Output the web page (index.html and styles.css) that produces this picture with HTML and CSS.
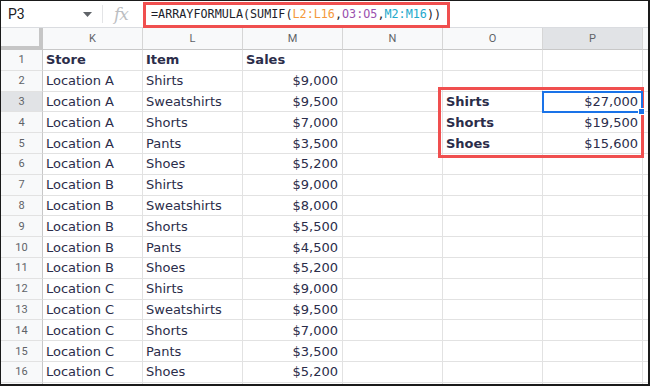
FILE: index.html
```html
<!DOCTYPE html>
<html lang="en">
<head>
    <meta charset="UTF-8">
    <meta name="viewport" content="width=device-width, initial-scale=1.0">
    <title>ARRAYFORMULA SUMIF</title>
    <link rel="stylesheet" href="styles.css">
</head>
<body>
    <div class="sheet">
        <div class="formula-bar">
            <div class="name-box">
                <span>P3</span>
                <svg class="caret" width="9" height="5" viewBox="0 0 9 5"><path d="M0 0h9L4.5 5z" fill="#5f6368"/></svg>
            </div>
            <div class="fx">fx</div>
            <div class="formula">=ARRAYFORMULA(SUMIF(<span class="ref-l">L2:L16</span>,<span class="ref-o">O3:O5</span>,<span class="ref-m">M2:M16</span>))</div>
        </div>
        <div class="grid" id="grid"></div>

        <div class="callout callout-formula"></div>
        <div class="callout callout-summary"></div>
        <div class="selection"><span class="handle"></span></div>
    </div>

    <script>
        const grid = document.getElementById('grid');
        const cols = ['K', 'L', 'M', 'N', 'O', 'P', ''];
        const rows = [
            ['Store', 'Item', 'Sales'],
            ['Location A', 'Shirts', '$9,000'],
            ['Location A', 'Sweatshirts', '$9,500', 'Shirts', '$27,000'],
            ['Location A', 'Shorts', '$7,000', 'Shorts', '$19,500'],
            ['Location A', 'Pants', '$3,500', 'Shoes', '$15,600'],
            ['Location A', 'Shoes', '$5,200'],
            ['Location B', 'Shirts', '$9,000'],
            ['Location B', 'Sweatshirts', '$8,000'],
            ['Location B', 'Shorts', '$5,500'],
            ['Location B', 'Pants', '$4,500'],
            ['Location B', 'Shoes', '$5,200'],
            ['Location C', 'Shirts', '$9,000'],
            ['Location C', 'Sweatshirts', '$9,500'],
            ['Location C', 'Shorts', '$7,000'],
            ['Location C', 'Pants', '$3,500'],
            ['Location C', 'Shoes', '$5,200'],
            []
        ];

        function addCell(cls, text) {
            const cell = document.createElement('div');
            cell.className = cls;
            cell.textContent = text || '';
            grid.appendChild(cell);
        }

        // header row
        addCell('corner');
        cols.forEach(c => addCell(c === 'P' ? 'col-head active' : 'col-head', c));

        rows.forEach((r, i) => {
            const num = i + 1;
            addCell(num === 3 ? 'row-head active' : 'row-head', num <= 16 ? num : '');
            const bold = num === 1 ? ' bold' : '';
            addCell('cell' + bold, r[0]);
            addCell('cell' + bold, r[1]);
            addCell(num === 1 ? 'cell bold' : 'cell num', r[2]);
            addCell('cell');
            addCell('cell bold', r[3]);
            addCell('cell num', r[4]);
            addCell('cell');
        });
    </script>
</body>
</html>
```

FILE: styles.css
```css
body {
    margin: 0;
    background-color: #fff;
    font-family: "DejaVu Sans", Verdana, sans-serif;
}
.sheet {
    position: relative;
    width: 650px;
    height: 386px;
    box-sizing: border-box;
    border-top: 1px solid #1a1a1a;
    border-left: 1px solid #1a1a1a;
    border-right: 2px solid #1a1a1a;
    border-bottom: 2px solid #1a1a1a;
    overflow: hidden;
}
.formula-bar {
    display: flex;
    align-items: center;
    height: 27px;
    box-sizing: border-box;
    border-bottom: 1px solid #dadce0;
}
.name-box {
    display: flex;
    align-items: center;
    justify-content: space-between;
    width: 102px;
    padding: 0 10px 0 7px;
    box-sizing: border-box;
    font-family: Roboto, Arial, sans-serif;
    font-size: 14px;
    color: #202124;
    border-right: 1px solid #e3e4e6;
    height: 18px;
    margin-right: 1px;
}
.fx {
    width: 37px;
    padding-left: 10px;
    box-sizing: border-box;
    font-family: "DejaVu Serif", serif;
    font-style: italic;
    font-size: 17px;
    color: #bcbec2;
    letter-spacing: -1px;
}
.formula {
    padding-left: 10px;
    font-family: "DejaVu Sans Mono", monospace;
    font-size: 11.75px;
    color: #1c1d2a;
    transform: scaleY(1.1);
}
.ref-l { color: #f4983b; }
.ref-o { color: #9a4fae; }
.ref-m { color: #21a9cc; }
.grid {
    display: grid;
    grid-template-columns: 42px repeat(6, 100px) 1fr;
    grid-template-rows: 22px;
    grid-auto-rows: 20.8px;
}
.grid > div {
    box-sizing: border-box;
    border-right: 1px solid #e2e2e2;
    border-bottom: 1px solid #e2e2e2;
    display: flex;
    align-items: center;
    overflow: hidden;
    white-space: nowrap;
}
.grid .corner {
    background-color: #f8f9fa;
    border-right: 4px solid #c6c6c6;
    border-bottom: 4px solid #c6c6c6;
}
.col-head {
    justify-content: center;
    background-color: #f8f9fa;
    font-family: Roboto, Arial, sans-serif;
    font-size: 11px;
    color: #5f6368;
    border-right-color: #d6d6d6 !important;
    border-bottom-color: #c8c8c8 !important;
}
.row-head {
    justify-content: center;
    background-color: #f8f9fa;
    font-family: Roboto, Arial, sans-serif;
    font-size: 11px;
    color: #5f6368;
    border-right-color: #c8c8c8 !important;
}
.active {
    background-color: #e1e3e6;
}
.cell {
    padding: 0 3px;
    font-size: 13px;
    color: #2b2d4a;
}
.cell.num {
    justify-content: flex-end;
    padding-right: 4px;
}
.cell.bold {
    font-weight: bold;
}
.callout {
    position: absolute;
    border: 3px solid #f04f4f;
    box-sizing: border-box;
}
.callout-formula {
    left: 142px;
    top: 1px;
    width: 307px;
    height: 26px;
}
.callout-summary {
    left: 437px;
    top: 86px;
    width: 206px;
    height: 71px;
}
.selection {
    position: absolute;
    left: 541px;
    top: 90px;
    width: 101px;
    height: 22px;
    box-sizing: border-box;
    border: 2px solid #1a73e8;
}
.handle {
    position: absolute;
    right: -4px;
    bottom: -4px;
    width: 5px;
    height: 5px;
    background-color: #1a73e8;
    border: 1px solid #fff;
}
```
